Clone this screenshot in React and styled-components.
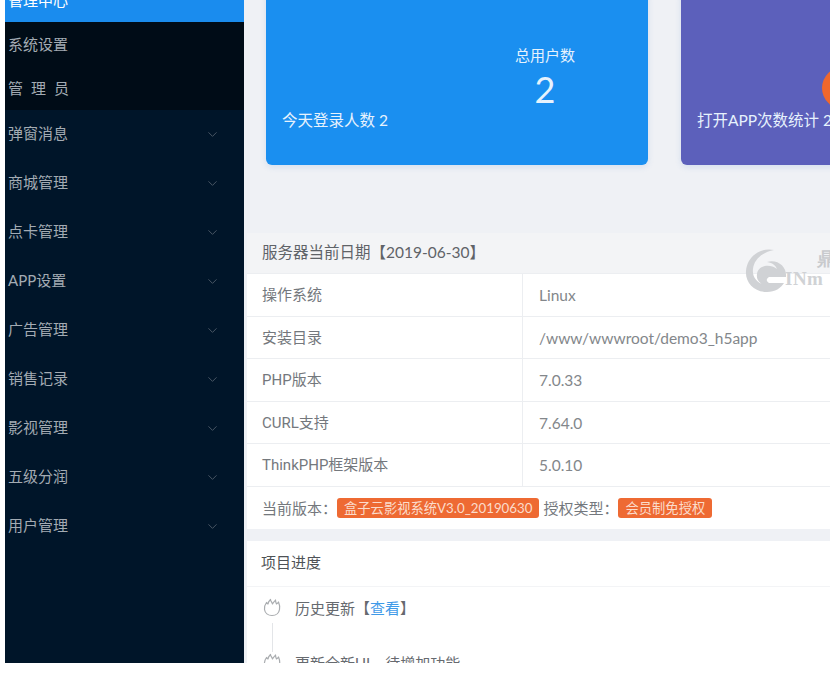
import React from 'react';
import styled, { createGlobalStyle } from 'styled-components';
import { ChevronDown } from 'lucide-react';

const GlobalStyle = createGlobalStyle`
  html, body {
    margin: 0;
    padding: 0;
    background: #fff;
    font-family: "Lato", "Noto Sans CJK SC", sans-serif;
  }
`;

const Page = styled.div`
  display: flex;
  width: 830px;
  height: 663px;
  padding-left: 5px;
  box-sizing: border-box;
  overflow: hidden;
`;

const Sidebar = styled.aside`
  flex: none;
  width: 239px;
  background: #001529;
  color: #a3abb3;
  font-size: 15px;
`;

const SubMenu = styled.div`
  background: #000c17;
  margin-top: -22px;
`;

const SubItem = styled.div`
  height: 44px;
  line-height: 44px;
  padding-left: 3px;
  letter-spacing: ${props => (props.$spaced ? '8px' : '0')};
  background: ${props => (props.$active ? '#1a8cee' : 'transparent')};
  color: ${props => (props.$active ? '#fff' : '#a3abb3')};
`;

const MenuItem = styled.div`
  display: flex;
  align-items: center;
  justify-content: space-between;
  height: 49px;
  padding: 0 24px 0 3px;
  span {
    margin-top: -5px;
  }
  svg {
    color: #4d5a68;
  }
`;

const Main = styled.main`
  flex: 1;
  min-width: 0;
  background: #eff1f5;
  padding-left: 3px;
  overflow: hidden;
`;

const Cards = styled.div`
  display: flex;
  gap: 33px;
  height: 165px;
  padding-left: 19px;
  margin-bottom: 68px;
`;

const Card = styled.div`
  position: relative;
  flex: none;
  display: flex;
  flex-direction: column;
  justify-content: flex-end;
  box-sizing: border-box;
  width: 382px;
  height: 175px;
  margin-top: -10px;
  padding: 0 16px 35px;
  border-radius: 6px;
  background: ${props => props.$color};
  box-shadow: 0 2px 6px rgba(60, 120, 200, 0.15);
  color: #e6f2fd;
  font-size: 15.5px;
  white-space: nowrap;
`;

const Stat = styled.div`
  display: flex;
  flex-direction: column;
  align-items: center;
  width: 70px;
  margin: 0 0 -3px 228px;
  font-size: 15px;
  strong {
    font-size: 36px;
    font-weight: 400;
    line-height: 44px;
    margin-top: 2px;
  }
`;

const Avatar = styled.div`
  width: 42px;
  height: 42px;
  margin: 0 0 -1px 125px;
  border-radius: 50%;
  background: #f0672d;
`;

const Panel = styled.section`
  position: relative;
  background: #fff;
  overflow: hidden;
`;

const PanelHeader = styled.div`
  height: 40px;
  line-height: 38px;
  padding-left: 15px;
  background: #f3f4f6;
  color: #5f6368;
  font-size: 15.5px;
  border-bottom: 1px solid #eceef1;
`;

const Row = styled.div`
  display: grid;
  grid-template-columns: 276px 1fr;
  height: 42.5px;
  box-sizing: border-box;
  border-bottom: 1px solid #eceef1;
  color: #74787d;
  font-size: 15px;
  line-height: 42px;
`;

const Label = styled.div`
  padding-left: 15px;
  border-right: 1px solid #eceef1;
  font-family: "Roboto", "Noto Sans CJK SC", sans-serif;
`;

const Value = styled.div`
  padding-left: 16px;
  color: #83878b;
  font-size: 15.5px;
`;

const VersionRow = styled.div`
  display: flex;
  align-items: center;
  height: 42px;
  padding-left: 15px;
  color: #74787d;
  font-size: 15px;
  white-space: nowrap;
`;

const Tag = styled.span`
  margin: 0 4px 0 0;
  padding: 0 7px;
  height: 20px;
  line-height: 20px;
  border-radius: 3px;
  background: #ee6a33;
  color: #fbdccb;
  font-size: 13.3px;
`;

const Watermark = styled.div`
  position: absolute;
  top: 16px;
  left: 498px;
  display: flex;
  color: #d0d2d5;
  font-family: "Liberation Serif", serif;
  font-weight: 700;
  pointer-events: none;
`;

const WatermarkText = styled.div`
  display: flex;
  flex-direction: column;
  align-items: flex-end;
  margin-left: -2px;
  font-size: 19px;
  line-height: 20px;
  width: 44px;
  white-space: nowrap;
  i {
    font-style: normal;
    font-size: 18px;
    color: #c8cacd;
    margin-right: -6px;
  }
  span {
    align-self: flex-start;
    letter-spacing: 0.5px;
  }
`;

const ProgressPanel = styled(Panel)`
  margin-top: 12px;
`;

const ProgressTitle = styled.div`
  height: 45px;
  line-height: 43px;
  padding-left: 14px;
  border-bottom: 1px solid #f3f4f6;
  color: #4e5256;
  font-size: 15px;
`;

const Timeline = styled.div`
  padding: 10px 0 0 16px;
`;

const Step = styled.div`
  position: relative;
  display: flex;
  gap: 14px;
  height: 55px;
  color: #666a6f;
  font-size: 15px;
  line-height: 22px;
  svg {
    flex: none;
    color: #a9acaf;
    margin-top: 1px;
  }
  &:first-child::after {
    content: '';
    position: absolute;
    left: 9px;
    top: 26px;
    bottom: 0;
    width: 1px;
    background: #e3e5e8;
  }
`;

const Link = styled.a`
  color: #3f9ae8;
`;

const FireIcon = () => (
  <svg width="18" height="19" viewBox="0 0 18 19" fill="none" stroke="currentColor" strokeWidth="1.2" strokeLinejoin="round">
    <path d="M5 6 C5 4.5 6 3 7.5 1.5 C7.5 3.5 9 4 9.5 6 C10 4.5 11.5 3.5 12.5 2 C12.5 4 13 4.5 13.5 6 C14.5 5.5 15 5 15.5 4 C16.8 7 17 9 16.5 11.5 C15.8 15.5 12.5 17.5 9 17.5 C5 17.5 2 15 1.5 11.5 C1.2 9 2 6.5 3.5 4.5 C3.7 5.2 4.2 5.7 5 6 Z" />
  </svg>
);

const menus = ['弹窗消息', '商城管理', '点卡管理', 'APP设置', '广告管理', '销售记录', '影视管理', '五级分润', '用户管理'];

const rows = [
  ['操作系统', 'Linux'],
  ['安装目录', '/www/wwwroot/demo3_h5app'],
  ['PHP版本', '7.0.33'],
  ['CURL支持', '7.64.0'],
  ['ThinkPHP框架版本', '5.0.10'],
];

export default function App() {
  return (
    <>
      <GlobalStyle />
      <Page>
        <Sidebar>
          <SubMenu>
            <SubItem $active>管理中心</SubItem>
            <SubItem>系统设置</SubItem>
            <SubItem $spaced>管理员</SubItem>
          </SubMenu>
          {menus.map(name => (
            <MenuItem key={name}>
              <span>{name}</span>
              <ChevronDown size={15} strokeWidth={1.5} />
            </MenuItem>
          ))}
        </Sidebar>
        <Main>
          <Cards>
            <Card $color="#1a8ff0">
              <Stat>
                总用户数
                <strong>2</strong>
              </Stat>
              今天登录人数 2
            </Card>
            <Card $color="#5c60bb">
              <Avatar />
              打开APP次数统计 2
            </Card>
          </Cards>
          <Panel>
            <PanelHeader>服务器当前日期【2019-06-30】</PanelHeader>
            {rows.map(([label, value]) => (
              <Row key={label}>
                <Label>{label}</Label>
                <Value>{value}</Value>
              </Row>
            ))}
            <VersionRow>
              当前版本：
              <Tag>盒子云影视系统V3.0_20190630</Tag>
              授权类型：
              <Tag>会员制免授权</Tag>
            </VersionRow>
            <Watermark>
              <svg width="42" height="44" viewBox="0 0 42 44">
                <path
                  d="M29 1 C15 -2 2 8 1 22 C0 34 10 43 22 43 C30 43 36 39 39 34 L24 34 C21 32 21 30 24 28 L41 28 C42 18 33 10 22 13 C28 14 31 17 32 20 C24 14 13 17 12 25 C11 31 15 35 20 36 C12 34 7 28 8 20 C9 10 18 3 29 1 Z"
                  fill="#d0d2d5"
                />
              </svg>
              <WatermarkText>
                <i>鼎</i>
                <span>INm</span>
              </WatermarkText>
            </Watermark>
          </Panel>
          <ProgressPanel>
            <ProgressTitle>项目进度</ProgressTitle>
            <Timeline>
              <Step>
                <FireIcon />
                <span>历史更新【<Link>查看</Link>】</span>
              </Step>
              <Step>
                <FireIcon />
                <span>更新全新UI，待增加功能</span>
              </Step>
            </Timeline>
          </ProgressPanel>
        </Main>
      </Page>
    </>
  );
}
